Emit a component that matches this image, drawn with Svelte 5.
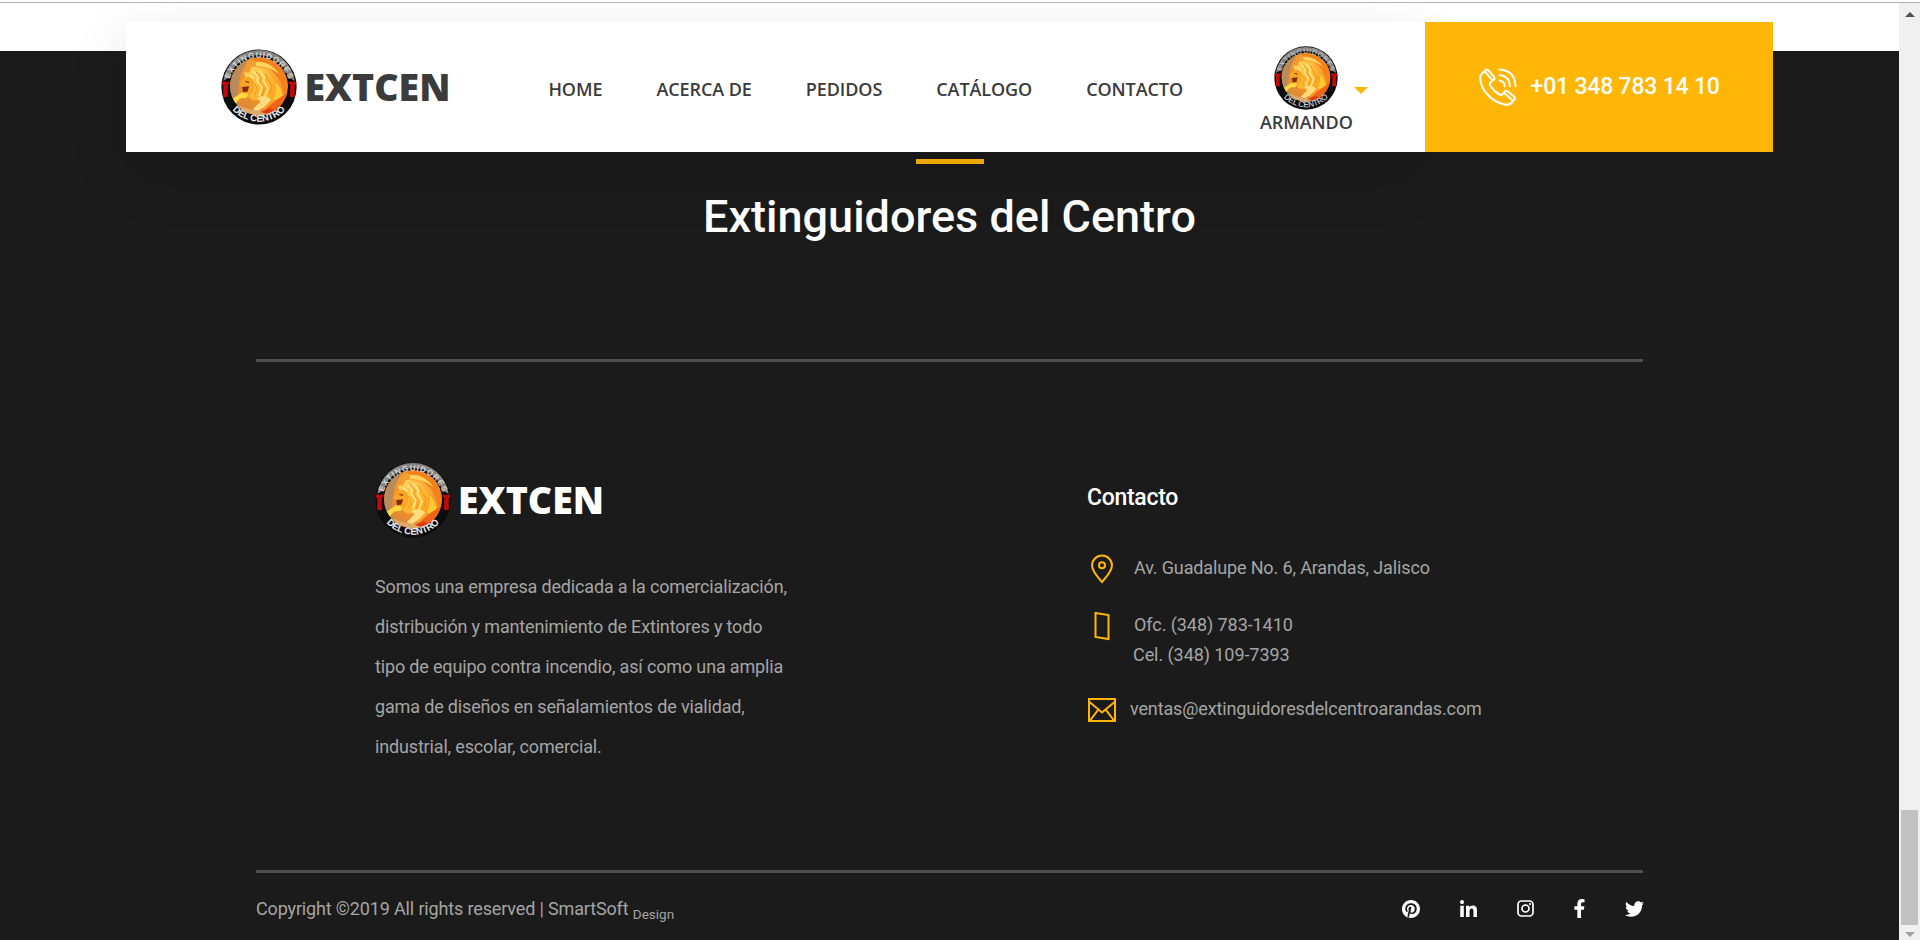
<script>
  const nav = ['HOME', 'ACERCA DE', 'PEDIDOS', 'CATÁLOGO', 'CONTACTO'];
  const about = [
    'Somos una empresa dedicada a la comercialización,',
    'distribución y mantenimiento de Extintores y todo',
    'tipo de equipo contra incendio, así como una amplia',
    'gama de diseños en señalamientos de vialidad,',
    'industrial, escolar, comercial.'
  ];
</script>

{#snippet emblem(size, key)}
  <svg class="emblem" width={size} height={size} viewBox="0 0 100 100">
    <defs>
      <radialGradient id="fire-{key}" cx="60%" cy="30%" r="75%">
        <stop offset="0" stop-color="#ffb43a" />
        <stop offset="0.5" stop-color="#f08f2a" />
        <stop offset="1" stop-color="#c98347" />
      </radialGradient>
      <linearGradient id="mane-{key}" x1="0" y1="0" x2="1" y2="1">
        <stop offset="0" stop-color="#ffd765" />
        <stop offset="0.5" stop-color="#ffb52c" />
        <stop offset="1" stop-color="#fb8d1c" />
      </linearGradient>
      <path id="top-{key}" d="M10.500 43 A40.500 40.500 0 0 1 89.500 43" />
      <path id="low-{key}" d="M9 72 A47.500 47.500 0 0 0 91 72" />
      <clipPath id="disc-{key}"><circle cx="50" cy="49" r="38" /></clipPath>
    </defs>
    <circle cx="50" cy="50" r="49.500" fill="#0b0c0d" />
    <path d="M3 42 A47.500 47.500 0 0 1 97 42 L88.500 37 A40 40 0 0 0 11.500 37Z" fill="#858585" />
    <g clip-path="url(#disc-{key})">
      <rect width="100" height="100" fill="url(#fire-{key})" />
      <path d="M8 28 L36 14 Q24 30 23 50 Q20 66 26 88 L8 80Z" fill="#b98a5c" />
      <path d="M40 13 Q66 8 82 28 Q92 46 84 66 Q81 36 60 24 Q50 19 40 13Z" fill="#f7801a" />
      <path d="M46 17 Q64 15 77 33 Q62 22 46 22Z" fill="#ffd45f" />
      <path d="M32 37 L30 31 L37 31 L40 24 Q60 22 66 37 L72 44 L69 48 L73 56 Q79 60 82 72 Q68 84 54 78 Q57 72 50 67 Q40 70 36 62 L40 54Z" fill="url(#mane-{key})" />
      <path d="M26 43 Q30 37 37 37 Q44 40 44 47 Q44 57 37 62 L30 62 L29 58 L36 55 L28 50 L24 47Z" fill="#f9a526" />
      <path d="M28 50 L37 49 L35 56 L29 57Z" fill="#7d2c0c" />
      <path d="M32 42.500 L37 44" stroke="#8c3a0b" stroke-width="1.800" />
      <path d="M42 29 L49 36 L47 41 L54 50 L50 62 M50 28 L57 37 L56 42 L62 52 L57 64 M37 34 L43 39" stroke="#ffe98f" stroke-width="2.200" fill="none" />
      <path d="M46 30 L53 39 L51 43 L57 51 L54 62 M58 32 L62 41 L67 48 L65 58 M44 45 L48 52 L44 61" stroke="#f0901c" stroke-width="1.300" fill="none" />
      <path d="M14 66 L28 57 L36 60 L34 64 L25 65 L18 73 L16 70Z" fill="#ffd93f" />
      <path d="M47 64 Q61 59 66 67 L56 77 L47 83 L42 79 L45 76 L52 69Z" fill="#ffdc7d" />
      <path d="M71 44 Q84 52 81 74 Q75 67 68 66 Q74 56 71 44Z" fill="#ffc931" />
      <path d="M58 80 Q72 66 88 58 L85 76 L68 87 Q64 83 58 80Z" fill="#f0641a" />
      <path d="M24 74 Q38 82 58 81 L70 88 L36 90 L26 82Z" fill="#dfa968" />
      <path d="M52 83 L64 78 L72 82 L62 86Z" fill="#e23a0c" />
    </g>
    <g fill="#c40808">
      <path d="M1 43 h10 v3 h-2 v17 h-6 v-16 h-2Z" />
      <path d="M99 43 h-10 v3 h2 v17 h6 v-16 h2Z" />
    </g>
    <text class="ring top"><textPath href="#top-{key}" startOffset="50%" text-anchor="middle" textLength="102">EXTINGUIDORES</textPath></text>
    <text class="ring low"><textPath href="#low-{key}" startOffset="50%" text-anchor="middle" textLength="78">DEL CENTRO</textPath></text>
  </svg>
{/snippet}

<div class="window">
  <div class="page">
    <div class="previous"></div>
    <header>
      <div class="menu">
        <div class="brand">{@render emblem(76, 'head')}<span>EXTCEN</span></div>
        <nav>
          {#each nav as item}<a href="#top">{item}</a>{/each}
        </nav>
        <div class="user">
          {@render emblem(64, 'user')}
          <span>ARMANDO</span>
        </div>
        <i class="caret"></i>
      </div>
      <div class="call">
        <svg width="38" height="38" viewBox="0 0 38 38" fill="none" stroke="#fff" stroke-width="2" stroke-linejoin="round" stroke-linecap="round">
          <path d="M4 4.500 L6.500 2.200 Q8 1 9.500 2.500 L15 8.700 Q16 10.200 15 11.500 L12 13.800 Q10 15.500 11.500 18 Q15 23.500 20.500 26.500 Q22.500 27.500 24 25.700 L25.700 23.500 Q27 22 28.600 23.300 L35 28.500 Q36.700 30 35.300 31.700 L33.500 34 Q31 37 26.500 36.700 Q16 35 8 26 Q1.500 18.500 1.200 10 Q1.200 7 4 4.500Z" />
          <path d="M5.800 3.500 L13.600 12.300 M25.200 25 L34 32.800" />
          <path d="M20.500 1.400 Q36.200 2.500 36.500 18.300 M20.500 7 Q30.500 8 31 18.300 M20.500 12.600 Q25.500 13.200 25.700 18.300" />
        </svg>
        <span>+01 348 783 14 10</span>
      </div>
    </header>

    <footer>
      <div class="bar"></div>
      <h2>Extinguidores del Centro</h2>
      <div class="columns">
        <section class="about">
          <div class="brand light">{@render emblem(76, 'foot')}<span>EXTCEN</span></div>
          <p>{#each about as line}<span>{line}</span>{/each}</p>
        </section>
        <section class="contact">
          <h3>Contacto</h3>
          <div class="row place">
            <svg width="28" height="30" viewBox="0 0 28 30"><path d="M14 28 Q4 17 4 11.500 A10 10 0 0 1 24 11.500 Q24 17 14 28Z" /><circle cx="14" cy="11.300" r="3" /></svg>
            <span>Av. Guadalupe No. 6, Arandas, Jalisco</span>
          </div>
          <div class="row phone">
            <svg width="28" height="30" viewBox="0 0 28 30"><path d="M7.500 2 L20.500 4 V28 L7.500 26Z" /></svg>
            <span>Ofc. (348) 783-1410<br /><b>Cel. (348) 109-7393</b></span>
          </div>
          <div class="row mail">
            <svg width="28" height="30" viewBox="0 0 28 30"><path d="M1 4 H27 V26 H1Z M1.500 7 L14 17.500 L26.500 7 M2 25.500 L10.300 14.700 M26 25.500 L17.700 14.700" /></svg>
            <span>ventas@extinguidoresdelcentroarandas.com</span>
          </div>
        </section>
      </div>
      <div class="bottom">
        <div class="copy">Copyright ©2019 All rights reserved | SmartSoft <small>Design</small></div>
        <div class="social">
          <svg width="18" height="18" viewBox="0 0 496 496"><path d="M496 248c0 137-111 248-248 248-25.600 0-50.200-3.900-73.400-11.100 10.100-16.500 25.200-43.500 30.800-65 3-11.600 15.400-59 15.400-59 8.100 15.400 31.700 28.500 56.800 28.500 74.800 0 128.700-68.800 128.700-154.300 0-81.900-66.900-143.200-152.900-143.200-107 0-163.900 71.800-163.900 150.100 0 36.400 19.400 81.700 50.300 96.100 4.700 2.200 7.200 1.200 8.300-3.300.8-3.400 5-20.300 6.900-28.100.6-2.500.3-4.700-1.700-7.100-10.100-12.500-18.300-35.300-18.300-56.600 0-54.700 41.400-107.600 112-107.600 60.900 0 103.600 41.500 103.600 100.900 0 67.100-33.900 113.600-78 113.600-24.300 0-42.600-20.100-36.700-44.800 7-29.500 20.500-61.300 20.500-82.600 0-19-10.200-34.900-31.400-34.900-24.900 0-44.900 25.700-44.900 60.200 0 22 7.400 36.800 7.400 36.800s-24.500 103.800-29 123.200c-5 21.400-3 51.600-.9 71.200C65.400 450.900 0 357.100 0 248 0 111 111 0 248 0s248 111 248 248z" /></svg>
          <svg width="17" height="17" viewBox="0 0 448 448"><path d="M100 448H7V149h93zM53.500 108C24 108 0 83.500 0 54S24 0 53.500 0 107 24.500 107 54s-24 54-53.500 54zM448 448h-93V302.400c0-34.700-.7-79.200-48.300-79.200-48.300 0-55.700 37.700-55.700 76.700V448h-93V149h89v41h1.300c12.400-23.500 42.700-48.300 88-48.300 94 0 111.300 61.900 111.300 142.300z" /></svg>
          <svg width="17" height="17" viewBox="0 0 17 17"><rect x="1" y="1" width="15" height="15" rx="3.500" fill="none" stroke="#fff" stroke-width="1.700" /><circle cx="8.500" cy="8.500" r="3.500" fill="none" stroke="#fff" stroke-width="1.700" /><circle cx="13" cy="4" r="1.100" /></svg>
          <svg width="11" height="19" viewBox="22 0 280 512"><path d="M279 288l14-93h-89v-60c0-25 12-50 52-50h41V7s-37-7-72-7c-73 0-121 44-121 125v70H23v93h81v224h100V288z" /></svg>
          <svg width="19" height="16" viewBox="0 48 512 416"><path d="M459 152c.3 4.500.3 9 .3 13.600 0 138.700-105.600 298.600-298.600 298.600-59.500 0-114.700-17.200-161.100-47.100 8.400 1 16.600 1.300 25.300 1.300 49 0 94.200-16.600 130.300-44.800-46.100-1-84.800-31.200-98.100-72.800 6.500 1 13 1.600 19.800 1.600 9.400 0 18.800-1.300 27.600-3.600-48-9.700-84.100-52-84.100-103v-1.300c14 7.800 30.200 12.700 47.400 13.300-28.300-18.800-46.800-51-46.800-87.400 0-19.500 5.200-37.400 14.300-53 51.700 63.700 129.300 105.300 216.400 109.800-1.600-7.800-2.600-15.900-2.600-24 0-57.800 46.800-104.900 104.900-104.900 30.200 0 57.500 12.700 76.700 33.100 23.700-4.500 46.500-13.300 66.600-25.300-7.800 24.400-24.400 44.800-46.100 57.800 21.100-2.300 41.600-8.100 60.400-16.200-14.300 20.800-32.200 39.300-52.600 54.300z" /></svg>
        </div>
      </div>
    </footer>
  </div>
  <div class="scrollbar">
    <i class="up"></i>
    <div class="thumb"></div>
    <i class="down"></i>
  </div>
</div>

<style>
  :global(body) { margin: 0; overflow: hidden; }
  .window { width: 1920px; height: 940px; display: flex; box-sizing: border-box; padding-top: 3px; background: linear-gradient(#fff 2px, #b0b0b0 2px, #b0b0b0 3px, #fff 3px); font-family: Roboto, sans-serif; overflow: hidden; }
  .page { position: relative; width: 1899px; height: 937px; overflow: hidden; display: flex; flex-direction: column; }
  .previous { height: 48px; flex: none; background: #fff; }
  header { position: absolute; z-index: 2; left: 126.400px; top: 19px; width: 1647px; height: 130px; display: flex; }
  .menu { width: 1298.200px; height: 130px; box-sizing: border-box; padding-left: 95px; background: #fff; display: flex; align-items: center; box-shadow: 0 20px 60px rgba(0, 0, 0, .13); font-family: "Open Sans", sans-serif; color: #3b3b3b; }
  .emblem { display: block; flex: none; }
  .ring { font-family: "Liberation Sans", sans-serif; }
  .top { font-size: 10.500px; fill: #d8d8d8; }
  .low { font-size: 12.500px; fill: #eee; }
  .brand { display: flex; align-items: center; gap: 7px; font: 800 37.500px/74px "Open Sans", sans-serif; height: 76px; }
  .menu .brand { width: 327px; flex: none; margin-top: -1px; }
  .light { color: #fff; }
  .menu .brand span { margin-top: 1px; }
  .light span { margin-top: -1px; }
  nav { display: flex; gap: 54px; width: 711px; flex: none; margin-top: 3px; }
  nav a, .user span { color: #3b3b3b; text-decoration: none; white-space: nowrap; font: 600 18px/24px "Open Sans", sans-serif; letter-spacing: -.08px; }
  .user { display: flex; flex-direction: column; align-items: center; width: 94px; flex: none; margin-top: 5px; }
  .caret { border: 7px solid transparent; border-top-color: #ffb607; border-bottom: 0; margin: 7px 0 0 1px; }
  .call { flex: 1; background: #ffb607; color: #fff; display: flex; align-items: center; padding-left: 54px; gap: 14px; font-size: 23px; letter-spacing: -.2px; font-weight: 500; white-space: nowrap; z-index: 1; }
  .call span { margin-top: -1px; }
  .call svg { margin-top: -1px; }
  footer { flex: 1; background: #1b1b1b; padding: 108px 256px 0; box-sizing: border-box; border-bottom: 1px solid #100c10; }
  .bar { width: 68px; height: 5px; background: #ffb607; margin: 0 auto; }
  h2 { margin: 23px 0 0; height: 60px; font-size: 45px; line-height: 60px; font-weight: 500; text-align: center; color: #fff; white-space: nowrap; }
  .columns { height: 508px; margin-top: 112px; border-top: 3px solid #4f4f4f; border-bottom: 3px solid #4f4f4f; display: flex; box-sizing: content-box; }
  .about { width: 712px; box-sizing: border-box; padding: 100px 0 0 119px; }
  .about p { margin: 29px 0 0; font-size: 18px; letter-spacing: -.16px; line-height: 40px; color: #a5a5a5; }
  .about p span { display: block; white-space: nowrap; }
  .contact { padding: 121px 0 0 119px; color: #a5a5a5; font-size: 18px; letter-spacing: -.14px; }
  h3 { margin: 0; font-size: 23px; line-height: 30px; font-weight: 500; color: #fff; letter-spacing: -.3px; }
  .row { display: flex; gap: 18px; line-height: 30px; white-space: nowrap; margin-left: 1px; }
  .row svg { fill: none; stroke: #ffb607; stroke-width: 2; flex: none; margin-top: 1px; }
  .row b { font-weight: 400; margin-left: -1px; }
  .place { margin-top: 40px; height: 30px; }
  .phone { margin-top: 27px; letter-spacing: -.07px; }
  .mail { margin-top: 24px; gap: 14px; }
  .bottom { display: flex; justify-content: space-between; height: 71px; align-items: center; color: #a5a5a5; font-size: 18px; letter-spacing: -.15px; }
  .copy small { font-size: 13.500px; letter-spacing: 0; position: relative; top: 4px; }
  .social { display: flex; align-items: center; gap: 40px; fill: #fff; margin-right: -1px; }
  .scrollbar { width: 21px; background: #f0f0f0; display: flex; flex-direction: column; align-items: center; }
  .up, .down { width: 0; height: 0; border: 5px solid transparent; }
  .up { border-top: 0; border-bottom-color: #505050; margin-top: 9px; }
  .down { border-bottom: 0; border-top-color: #a3a3a3; margin-top: 7px; }
  .thumb { width: 17px; height: 115px; background: #c1c1c1; margin-top: 793px; }
</style>
